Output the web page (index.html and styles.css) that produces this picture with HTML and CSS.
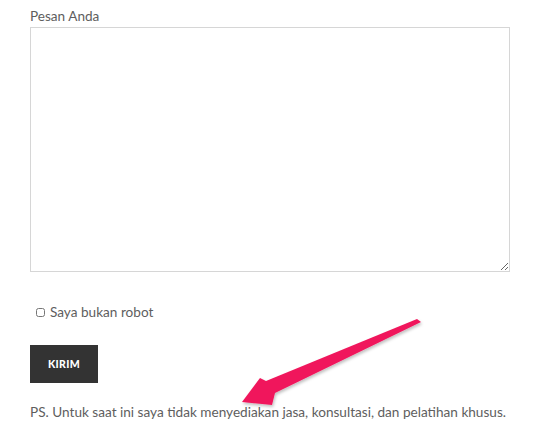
FILE: index.html
```html
<!DOCTYPE html>
<html lang="id">
<head>
<meta charset="UTF-8" />
<title>Kontak</title>
<link rel="stylesheet" href="styles.css">
</head>
<body>
<form id="kontak">
  <label class="lbl" for="pesan">Pesan Anda</label>
  <textarea id="pesan"></textarea>

  <label class="robot">
    <input type="checkbox" />
    <span>Saya bukan robot</span>
  </label>

  <button type="button" class="kirim">KIRIM</button>

  <p class="ps">PS. Untuk saat ini saya tidak menyediakan jasa, konsultasi, dan pelatihan khusus.</p>

  <svg class="panah" width="535" height="436" viewBox="0 0 535 436">
    <defs>
      <filter id="bayang" x="-20%" y="-20%" width="140%" height="140%">
        <feDropShadow dx="1" dy="2" stdDeviation="1.5" flood-color="#000" flood-opacity="0.25" />
      </filter>
    </defs>
    <path d="M417 319 L421 322 L275 393 L272 405 L242 402 L260 378 L266 381 Z" fill="#f0175c" filter="url(#bayang)" />
  </svg>
</form>
</body>
</html>
```

FILE: styles.css
```css
* {
  box-sizing: border-box;
}
body {
  margin: 0;
  background: #fff;
  font-family: Lato, "Open Sans", sans-serif;
  color: #5e5e5e;
}
#kontak {
  position: relative;
  padding: 8px 0 0 30px;
  width: 535px;
  height: 436px;
  display: flex;
  flex-direction: column;
  align-items: flex-start;
}
.lbl {
  font-size: 13.6px;
  line-height: 17px;
  margin-bottom: 2px;
}
#pesan {
  width: 480px;
  height: 245px;
  border: 1px solid #d6d6d6;
  border-radius: 0;
  resize: vertical;
  margin: 0;
  outline: none;
}
.robot {
  display: flex;
  align-items: center;
  gap: 5px;
  margin-top: 32px;
  margin-left: 6px;
  font-size: 13.6px;
}
.robot input {
  margin: 0;
  width: 9px;
  height: 9px;
}
.kirim {
  margin-top: 25px;
  width: 68px;
  height: 38px;
  border: none;
  background: #333;
  color: #fff;
  font-family: inherit;
  font-size: 10.5px;
  font-weight: 900;
  letter-spacing: 0.3px;
  padding: 0;
}
.ps {
  margin: 21px 0 0;
  font-size: 13.6px;
  line-height: 17px;
}
.panah {
  position: absolute;
  left: 0;
  top: 0;
  pointer-events: none;
}
```
